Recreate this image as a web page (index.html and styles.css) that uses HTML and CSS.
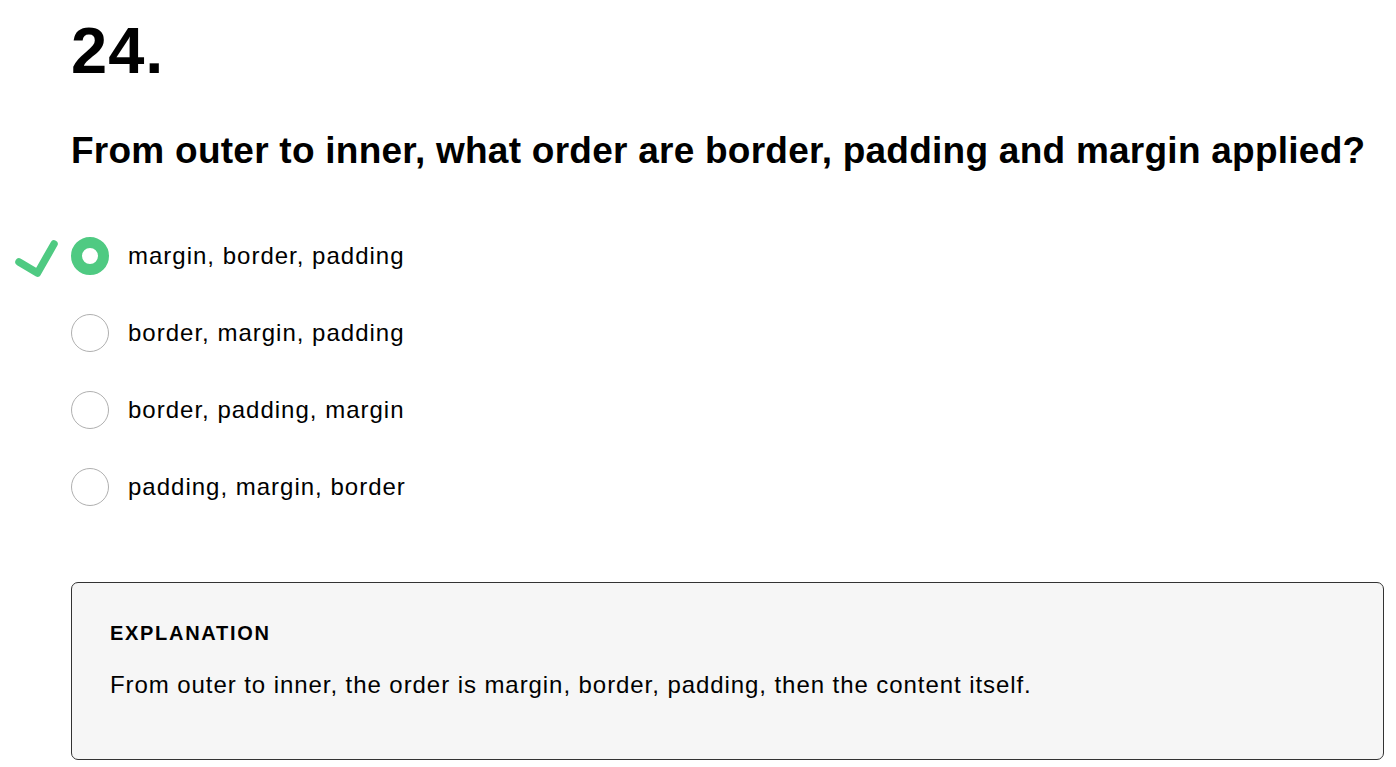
FILE: index.html
```html
<!DOCTYPE html>
<html lang="en">
<head>
<meta charset="utf-8">
<title>Question 24</title>
<link rel="stylesheet" href="styles.css">
</head>
<body>
<main class="quiz">
  <h1 class="number">24.</h1>
  <h2 class="question">From outer to inner, what order are border, padding and margin applied?</h2>
  <ul class="options">
    <li class="option correct">
      <svg class="check" width="50" height="40" viewBox="0 0 50 40" aria-hidden="true">
        <path d="M8 25 L26.5 36 L43 7" fill="none" stroke="#4fca82" stroke-width="7.5" stroke-linecap="round" stroke-linejoin="round"/>
      </svg>
      <span class="radio checked"></span>
      <span class="label">margin, border, padding</span>
    </li>
    <li class="option">
      <span class="radio"></span>
      <span class="label">border, margin, padding</span>
    </li>
    <li class="option">
      <span class="radio"></span>
      <span class="label">border, padding, margin</span>
    </li>
    <li class="option">
      <span class="radio"></span>
      <span class="label">padding, margin, border</span>
    </li>
  </ul>
  <section class="explanation">
    <h3 class="exp-title">EXPLANATION</h3>
    <p class="exp-text">From outer to inner, the order is margin, border, padding, then the content itself.</p>
  </section>
</main>
</body>
</html>
```
FILE: styles.css
```css
html, body {
  margin: 0;
  padding: 0;
  background: #ffffff;
}

body {
  font-family: "Liberation Sans", Arial, sans-serif;
  color: #000000;
}

.quiz {
  padding: 14px 0 0 71px;
  width: 1313px;
}

.number {
  margin: 0;
  font-size: 65px;
  font-weight: 700;
  line-height: 74px;
  letter-spacing: 1px;
}

.question {
  margin: 42px 0 0 0;
  font-size: 37px;
  font-weight: 700;
  line-height: 42px;
  letter-spacing: 0.25px;
}

.options {
  list-style: none;
  margin: 65px 0 0 0;
  padding: 0;
  display: flex;
  flex-direction: column;
  gap: 39px;
}

.option {
  position: relative;
  display: flex;
  align-items: center;
  gap: 19px;
  height: 38px;
}

.check {
  position: absolute;
  left: -60px;
  top: 0;
}

.radio {
  box-sizing: border-box;
  width: 38px;
  height: 38px;
  border-radius: 50%;
  border: 1px solid #b0b0b0;
  background: #ffffff;
  flex: none;
}

.radio.checked {
  border: 11.5px solid #4fca82;
}

.label {
  font-size: 24px;
  line-height: 28px;
  letter-spacing: 1px;
}

.explanation {
  margin-top: 76px;
  box-sizing: border-box;
  height: 178px;
  border: 1px solid #333333;
  border-radius: 7px;
  background: #f6f6f6;
  padding: 39px 38px 0 38px;
}

.exp-title {
  margin: 0;
  font-size: 20px;
  font-weight: 700;
  line-height: 23px;
  letter-spacing: 1.7px;
}

.exp-text {
  margin: 26px 0 0 0;
  font-size: 24px;
  line-height: 28px;
  letter-spacing: 0.93px;
}
```
